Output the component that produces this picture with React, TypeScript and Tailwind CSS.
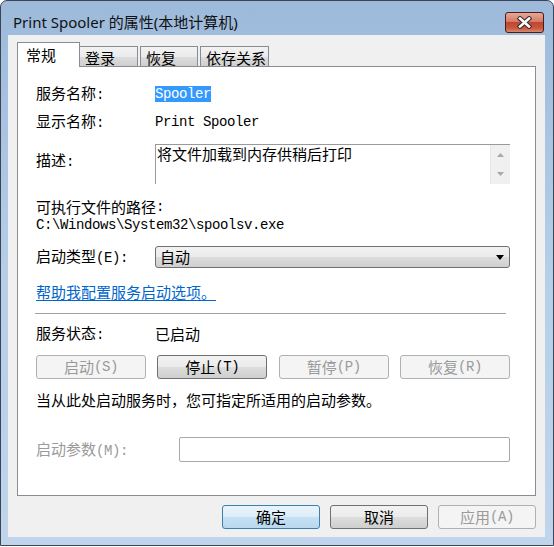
import React from "react";

const ASCII = /^[\x20-\x7e]+$/;

function M({ t }: { t: string }) {
  const parts = t.split(/([\x20-\x7e]+)/).filter(Boolean);
  return (
    <>
      {parts.map((p, i) =>
        ASCII.test(p) ? (
          <span key={i} className="font-['Liberation_Mono',monospace] text-[14px] tracking-[-0.4px]">
            {p}
          </span>
        ) : (
          <span key={i}>{p}</span>
        )
      )}
    </>
  );
}

type BtnKind = "normal" | "disabled" | "default";

function Btn({ label, kind, w }: { label: string; kind: BtnKind; w: string }) {
  const base = "h-[24px] rounded-[3px] border flex items-center justify-center " + w;
  if (kind === "disabled")
    return (
      <div className={base + " border-[#adb2b5] bg-[#f4f4f4] text-[#9a9a9a]"}>
        <M t={label} />
      </div>
    );
  if (kind === "default")
    return (
      <div className={base + " border-[#3c7fb1] bg-[linear-gradient(#eaf4fb,#dcedf9_50%,#c7e1f3_50%,#b9d8ee)] text-black"}>
        <M t={label} />
      </div>
    );
  return (
    <div className={base + " border-[#707070] bg-[linear-gradient(#f2f2f2,#ebebeb_50%,#dddddd_50%,#cfcfcf)] text-black"}>
      <M t={label} />
    </div>
  );
}

export default function App() {
  return (
    <div className="w-[554px] h-[547px] bg-white font-['Noto_Sans_CJK_SC',sans-serif] text-[15px] leading-[16px] text-black">
      <div className="w-[554px] h-[546px] rounded-t-[7px] border border-[#3a4452] bg-linear-to-b from-[#9dbadb] via-[#b6cee8] to-[#c0d5ec] flex flex-col">
        {/* title bar */}
        <div className="h-[34px] flex justify-between pl-[12px] pr-[9px]">
          <div className="pt-[11px] leading-[20px] text-[15px] text-[#111] font-['Noto_Sans','Noto_Sans_CJK_SC',sans-serif]">
            Print Spooler 的属性(本地计算机)
          </div>
          <div className="mt-[11px] w-[39px] h-[21px] rounded-[3px] border border-[#4a1d17] bg-[linear-gradient(#e7a898,#d47b64_45%,#c0462f_50%,#c9583f_80%,#d98a72)] flex items-center justify-center">
            <svg width="15" height="13" viewBox="0 0 15 13">
              <path d="M3 2.5 L12 10.5 M12 2.5 L3 10.5" stroke="#3b2a2a" strokeWidth="4.6" strokeLinecap="square" />
              <path d="M3 2.5 L12 10.5 M12 2.5 L3 10.5" stroke="#ffffff" strokeWidth="2.6" strokeLinecap="square" />
            </svg>
          </div>
        </div>

        {/* client */}
        <div className="ml-[7px] mr-[8px] h-[502px] bg-[#f0f0f0] pt-[7px] px-[9px] flex flex-col">
          {/* tabs */}
          <div className="h-[24px] flex items-end">
            <div className="relative z-10 w-[63px] h-[25px] -mb-px bg-white border border-b-0 border-[#898c95] pl-[8px] pt-[4px]">
              常规
            </div>
            <div className="w-[58px] h-[20px] border border-b-0 border-l-0 border-[#898c95] bg-[linear-gradient(#f2f2f2,#ebebeb_50%,#dddddd_50%,#cfcfcf)] pl-[5px] pt-[3px]">
              登录
            </div>
            <div className="ml-[2px] w-[58px] h-[20px] border border-b-0 border-[#898c95] bg-[linear-gradient(#f2f2f2,#ebebeb_50%,#dddddd_50%,#cfcfcf)] pl-[5px] pt-[3px]">
              恢复
            </div>
            <div className="ml-[2px] w-[69px] h-[20px] border border-b-0 border-[#898c95] bg-[linear-gradient(#f2f2f2,#ebebeb_50%,#dddddd_50%,#cfcfcf)] pl-[5px] pt-[3px]">
              依存关系
            </div>
          </div>

          {/* panel */}
          <div className="h-[430px] bg-white border border-[#898c95] pl-[18px] pr-[25px] flex flex-col">
            <div className="mt-[19px] h-[16px] flex items-center">
              <div className="w-[119px]"><M t="服务名称:" /></div>
              <span className="bg-[#3399ff] text-white h-[16px] flex items-center">
                <M t="Spooler" />
              </span>
            </div>
            <div className="mt-[12px] h-[16px] flex items-center">
              <div className="w-[119px]"><M t="显示名称:" /></div>
              <M t="Print Spooler" />
            </div>
            <div className="mt-[14px] h-[40px] flex items-start">
              <div className="w-[119px] mt-[8px]"><M t="描述:" /></div>
              <div className="flex-1 h-[40px] border-t border-l border-[#9a9a9a] flex">
                <div className="flex-1 pl-[1px] pt-[1px]">将文件加载到内存供稍后打印</div>
                <div className="w-[20px] h-[39px] bg-[#f0f0f0] border-l border-[#e6e6e6] flex flex-col items-center justify-between py-[8px]">
                  <svg width="7" height="4" viewBox="0 0 7 4"><path d="M0 4 L3.5 0 L7 4 Z" fill="#a8a8a8" /></svg>
                  <svg width="7" height="4" viewBox="0 0 7 4"><path d="M0 0 L3.5 4 L7 0 Z" fill="#a8a8a8" /></svg>
                </div>
              </div>
            </div>
            <div className="mt-[15px] h-[16px] flex items-center">
              <M t="可执行文件的路径:" />
            </div>
            <div className="mt-[2px] h-[16px] flex items-center">
              <M t="C:\Windows\System32\spoolsv.exe" />
            </div>
            <div className="mt-[13px] h-[22px] flex items-center">
              <div className="w-[119px]"><M t="启动类型(E):" /></div>
              <div className="flex-1 h-[22px] rounded-[3px] border border-[#707070] bg-[linear-gradient(#f2f2f2,#ebebeb_50%,#dddddd_50%,#cfcfcf)] flex items-center justify-between pl-[4px] pr-[5px]">
                <span>自动</span>
                <svg width="8" height="5" viewBox="0 0 8 5"><path d="M0 0 L8 0 L4 5 Z" fill="#000" /></svg>
              </div>
            </div>
            <div className="mt-[16px] h-[16px] flex items-center">
              <span className="text-[#0066cc] underline underline-offset-[2px]">帮助我配置服务启动选项。</span>
            </div>
            <div className="mt-[13px] h-px -ml-px mr-[4px] bg-[#a0a0a0]" />
            <div className="mt-[12px] h-[16px] flex items-center">
              <div className="w-[119px]"><M t="服务状态:" /></div>
              <span>已启动</span>
            </div>
            <div className="mt-[13px] h-[24px] flex justify-between">
              <Btn label="启动(S)" kind="disabled" w="w-[110px]" />
              <Btn label="停止(T)" kind="normal" w="w-[110px]" />
              <Btn label="暂停(P)" kind="disabled" w="w-[110px]" />
              <Btn label="恢复(R)" kind="disabled" w="w-[110px]" />
            </div>
            <div className="mt-[13px] h-[16px] flex items-center">
              当从此处启动服务时，您可指定所适用的启动参数。
            </div>
            <div className="mt-[29px] h-[25px] flex items-center">
              <div className="w-[143px] text-[#9a9a9a]"><M t="启动参数(M):" /></div>
              <div className="flex-1 h-[25px] border border-[#a8a8a8] rounded-[2px] bg-white" />
            </div>
          </div>

          {/* bottom buttons */}
          <div className="mt-[9px] h-[24px] flex justify-end gap-[10px]">
            <Btn label="确定" kind="default" w="w-[98px]" />
            <Btn label="取消" kind="normal" w="w-[98px]" />
            <Btn label="应用(A)" kind="disabled" w="w-[98px]" />
          </div>
        </div>
      </div>
    </div>
  );
}
